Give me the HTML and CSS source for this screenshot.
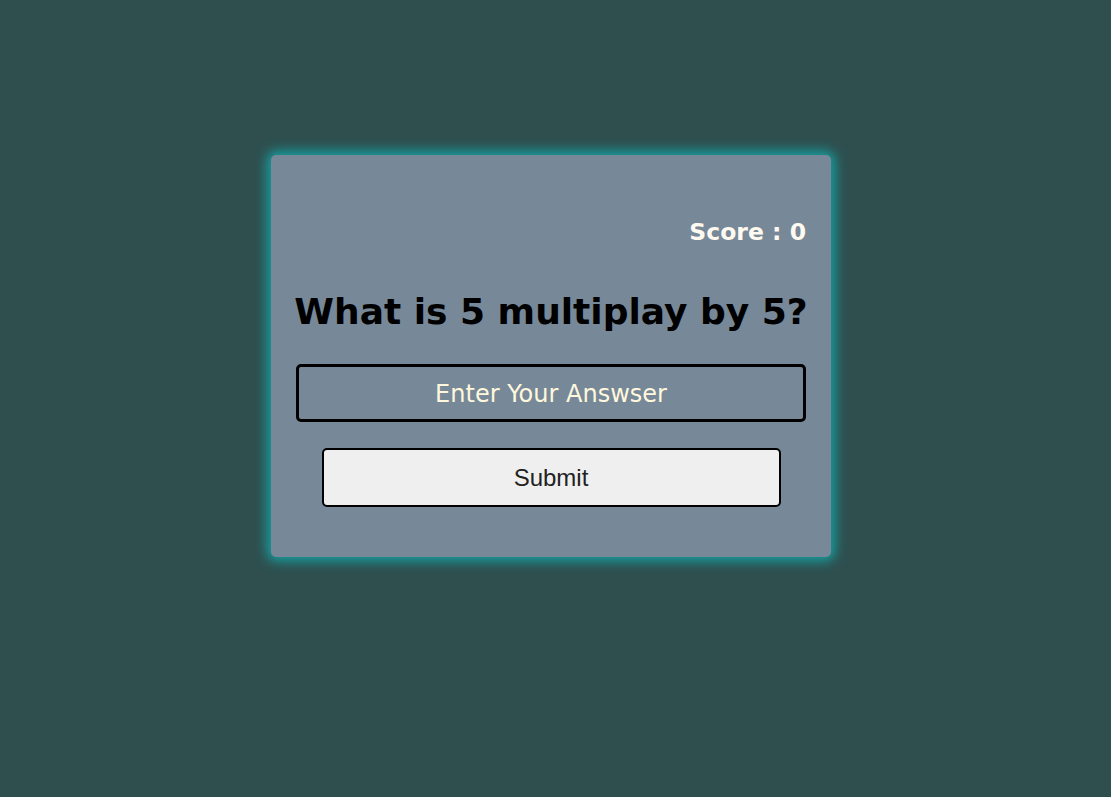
FILE: index.html
```html
<!DOCTYPE html>
<html lang="en">
<head>
<meta charset="utf-8">
<title>Quiz</title>
<link rel="stylesheet" href="styles.css">
</head>
<body>
<div class="page">
  <form class="card">
    <p class="score">Score : 0</p>
    <h1 class="question">What is 5 multiplay by 5?</h1>
    <input class="answer" type="text" placeholder="Enter Your Answser">
    <button class="submit" type="button">Submit</button>
  </form>
</div>
</body>
</html>
```

FILE: styles.css
```css
html, body {
  margin: 0;
  padding: 0;
  background: #2f4f4f;
  height: 100%;
}

.page {
  display: flex;
  justify-content: center;
  padding: 155px 9px 0 0;
}

.card {
  width: 560px;
  box-sizing: border-box;
  background: #778899;
  border-radius: 5px;
  box-shadow: 0 0 12px 4px #16a1a1;
  padding: 60px 25px 50px;
  display: flex;
  flex-direction: column;
  align-items: center;
  font-family: "Comic Sans MS", "DejaVu Sans", sans-serif;
}

.score {
  align-self: flex-end;
  margin: 0;
  height: 34px;
  line-height: 34px;
  font-size: 23.5px;
  font-weight: bold;
  color: #fffaf0;
}

.question {
  margin: 39px 0 0;
  height: 48px;
  line-height: 48px;
  font-size: 36px;
  font-weight: bold;
  color: #000;
  white-space: nowrap;
}

.answer {
  margin-top: 28px;
  width: 510px;
  height: 58px;
  box-sizing: border-box;
  border: 3px solid #000;
  border-radius: 5px;
  background: transparent;
  text-align: center;
  font-family: "Comic Sans MS", "DejaVu Sans", sans-serif;
  font-size: 24px;
  padding-top: 3px;
  color: #fff8dc;
  outline: none;
}

.answer::placeholder {
  color: #fff8dc;
  opacity: 1;
}

.submit {
  margin-top: 26px;
  width: 459px;
  height: 59px;
  box-sizing: border-box;
  border: 2px solid #000;
  border-radius: 5px;
  background: #efefef;
  font-family: "Liberation Sans", Arial, sans-serif;
  font-size: 24px;
  color: #222;
}
```
